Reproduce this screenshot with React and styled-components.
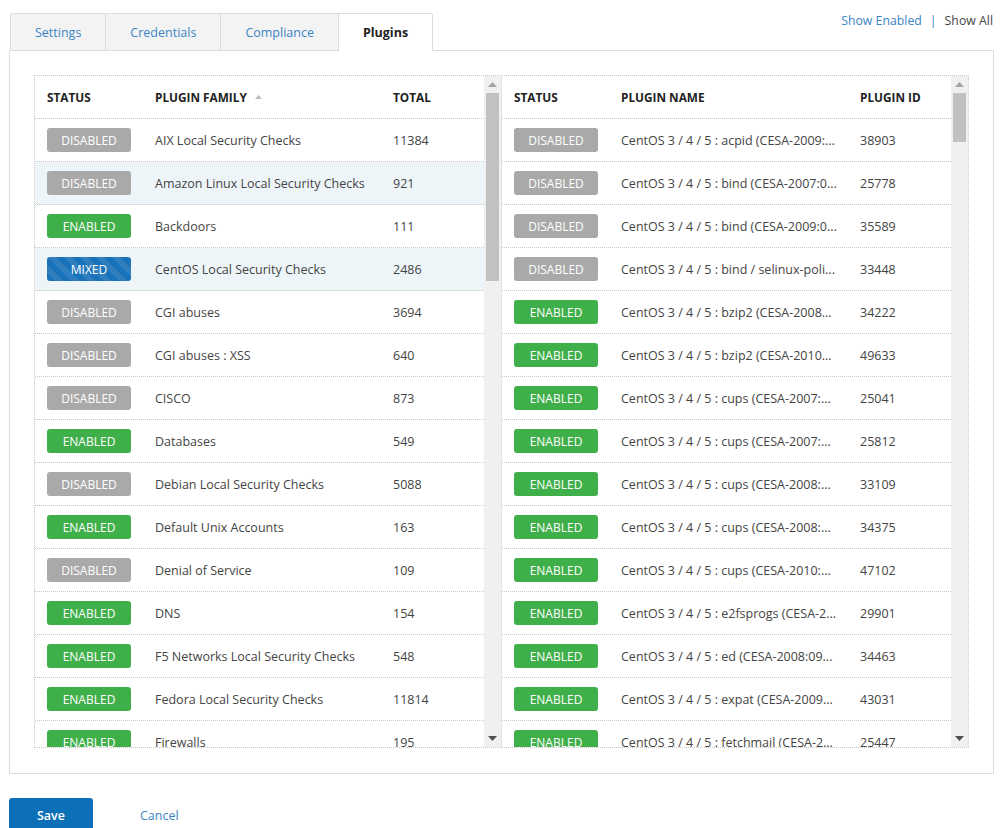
import React from "react";
import styled, { createGlobalStyle, css } from "styled-components";

const Global = createGlobalStyle`
  html, body { margin: 0; padding: 0; background: #fff; }
  body { font-family: "Open Sans", "Noto Sans", Arial, sans-serif; color: #444; }
  * { box-sizing: border-box; }
`;

const Page = styled.div`
  width: 1008px;
  height: 828px;
  overflow: hidden;
  padding: 13px 14px 0 9px;
`;

const TopRow = styled.div`
  display: flex;
  justify-content: space-between;
  align-items: flex-start;
`;

const TabBar = styled.div`
  display: flex;
  padding-left: 1px;
  position: relative;
  z-index: 1;
  margin-bottom: -1px;
`;

const Tab = styled.div`
  height: 38px;
  padding: 0 24px;
  display: flex;
  align-items: center;
  font-size: 12.5px;
  border: 1px solid #dcdcdc;
  border-left-width: ${(p) => (p.$first ? "1px" : "0")};
  border-radius: ${(p) => (p.$first ? "2px 0 0 0" : p.$last ? "0 2px 0 0" : "0")};
  background: ${(p) => (p.$active ? "#fff" : "#f3f3f3")};
  color: ${(p) => (p.$active ? "#222" : "#3a85c6")};
  font-weight: ${(p) => (p.$active ? 700 : 400)};
  border-bottom-color: ${(p) => (p.$active ? "#fff" : "#dcdcdc")};
`;

const Filters = styled.div`
  display: flex;
  align-items: center;
  gap: 8px;
  font-size: 12.3px;
  line-height: 16px;
  padding-right: 1px;
`;

const FilterLink = styled.span`
  color: ${(p) => (p.$active ? "#3a85c6" : "#444")};
`;

const Sep = styled.span`
  color: #3a85c6;
`;

const Panel = styled.div`
  border: 1px solid #dcdcdc;
  padding: 24px;
  height: 724px;
`;

const Tables = styled.div`
  display: flex;
  height: 673px;
`;

const Pane = styled.div`
  flex: 1;
  display: flex;
  border: 1px dotted #c8c8c8;
  ${(p) =>
    p.$left
      ? css`border-right: 1px solid #e2e2e2;`
      : css`border-left: none;`}
  min-width: 0;
`;

const Grid = styled.div`
  flex: 1;
  overflow: hidden;
  min-width: 0;
`;

const Row = styled.div`
  display: grid;
  grid-template-columns: ${(p) => p.$cols};
  align-items: center;
  height: 43px;
  border-bottom: 1px dotted #c8c8c8;
  background: ${(p) => (p.$hl ? "#eef5f9" : "#fff")};
`;

const HeadCell = styled.div`
  padding-left: 12px;
  font-size: 11.8px;
  font-weight: 700;
  color: #222;
  display: flex;
  align-items: center;
  gap: 8px;
  white-space: nowrap;
`;

const Cell = styled.div`
  padding-left: 12px;
  font-size: 12.5px;
  color: #444;
  white-space: nowrap;
  overflow: hidden;
`;

const Badge = styled.div`
  width: 84px;
  height: 24px;
  border-radius: 3px;
  color: #fff;
  font-size: 12px;
  display: flex;
  align-items: center;
  justify-content: center;
  background: ${(p) =>
    p.$s === "ENABLED" ? "#3faf4a" : p.$s === "MIXED" ? "#1a72ba" : "#a9a9a9"};
  ${(p) =>
    p.$s === "MIXED" &&
    css`
      background-image: linear-gradient(
        45deg,
        rgba(255, 255, 255, 0.09) 25%,
        transparent 25%,
        transparent 50%,
        rgba(255, 255, 255, 0.09) 50%,
        rgba(255, 255, 255, 0.09) 75%,
        transparent 75%,
        transparent
      );
      background-size: 16px 16px;
    `}
`;

const Scrollbar = styled.div`
  width: 17px;
  flex: none;
  background: #f0f0f0;
  display: flex;
  flex-direction: column;
  align-items: center;
`;

const ScrollBtn = styled.div`
  height: 17px;
  width: 17px;
  display: flex;
  align-items: center;
  justify-content: center;
`;

const Track = styled.div`
  flex: 1;
  width: 100%;
  padding: 0 2px;
`;

const Thumb = styled.div`
  height: ${(p) => p.$h}px;
  background: #c1c1c1;
`;

const Footer = styled.div`
  display: flex;
  align-items: center;
  margin-top: 24px;
  gap: 47px;
`;

const SaveBtn = styled.div`
  width: 84px;
  height: 36px;
  background: #0b70b8;
  color: #fff;
  font-size: 12.5px;
  font-weight: 600;
  border-radius: 3px 3px 0 0;
  display: flex;
  align-items: center;
  justify-content: center;
  padding-bottom: 2px;
`;

const CancelLink = styled.span`
  color: #3a85c6;
  font-size: 12.5px;
  margin-bottom: 2px;
`;

const SortArrow = () => (
  <svg width="7" height="4" viewBox="0 0 7 4">
    <path d="M0 4 L3.5 0 L7 4 Z" fill="#bbb" />
  </svg>
);

const Arrow = ({ up, color }) => (
  <svg width="9" height="5" viewBox="0 0 9 5">
    <path d={up ? "M0 5 L4.5 0 L9 5 Z" : "M0 0 L4.5 5 L9 0 Z"} fill={color} />
  </svg>
);

const ScrollBar = ({ thumb }) => (
  <Scrollbar>
    <ScrollBtn>
      <Arrow up color="#a3a3a3" />
    </ScrollBtn>
    <Track>
      <Thumb $h={thumb} />
    </Track>
    <ScrollBtn>
      <Arrow color="#505050" />
    </ScrollBtn>
  </Scrollbar>
);

const families = [
  ["DISABLED", "AIX Local Security Checks", "11384"],
  ["DISABLED", "Amazon Linux Local Security Checks", "921", true],
  ["ENABLED", "Backdoors", "111"],
  ["MIXED", "CentOS Local Security Checks", "2486", true],
  ["DISABLED", "CGI abuses", "3694"],
  ["DISABLED", "CGI abuses : XSS", "640"],
  ["DISABLED", "CISCO", "873"],
  ["ENABLED", "Databases", "549"],
  ["DISABLED", "Debian Local Security Checks", "5088"],
  ["ENABLED", "Default Unix Accounts", "163"],
  ["DISABLED", "Denial of Service", "109"],
  ["ENABLED", "DNS", "154"],
  ["ENABLED", "F5 Networks Local Security Checks", "548"],
  ["ENABLED", "Fedora Local Security Checks", "11814"],
  ["ENABLED", "Firewalls", "195"],
];

const P = "CentOS 3 / 4 / 5 : ";
const plugins = [
  ["DISABLED", P + "acpid (CESA-2009:...", "38903"],
  ["DISABLED", P + "bind (CESA-2007:0...", "25778"],
  ["DISABLED", P + "bind (CESA-2009:0...", "35589"],
  ["DISABLED", P + "bind / selinux-poli...", "33448"],
  ["ENABLED", P + "bzip2 (CESA-2008...", "34222"],
  ["ENABLED", P + "bzip2 (CESA-2010...", "49633"],
  ["ENABLED", P + "cups (CESA-2007:...", "25041"],
  ["ENABLED", P + "cups (CESA-2007:...", "25812"],
  ["ENABLED", P + "cups (CESA-2008:...", "33109"],
  ["ENABLED", P + "cups (CESA-2008:...", "34375"],
  ["ENABLED", P + "cups (CESA-2010:...", "47102"],
  ["ENABLED", P + "e2fsprogs (CESA-2...", "29901"],
  ["ENABLED", P + "ed (CESA-2008:09...", "34463"],
  ["ENABLED", P + "expat (CESA-2009...", "43031"],
  ["ENABLED", P + "fetchmail (CESA-2...", "25447"],
];

const LEFT_COLS = "108px 238px 1fr";
const RIGHT_COLS = "107px 239px 1fr";

const DataPane = ({ left, cols, heads, rows, thumb }) => (
  <Pane $left={left}>
    <Grid>
      <Row $cols={cols}>
        {heads.map((h, i) => (
          <HeadCell key={i}>
            {h}
            {left && i === 1 && <SortArrow />}
          </HeadCell>
        ))}
      </Row>
      {rows.map(([s, name, n, hl], i) => (
        <Row key={i} $cols={cols} $hl={hl}>
          <Cell>
            <Badge $s={s}>{s}</Badge>
          </Cell>
          <Cell>{name}</Cell>
          <Cell>{n}</Cell>
        </Row>
      ))}
    </Grid>
    <ScrollBar thumb={thumb} />
  </Pane>
);

export default function App() {
  return (
    <>
      <Global />
      <Page>
        <TopRow>
          <TabBar>
            <Tab $first>Settings</Tab>
            <Tab>Credentials</Tab>
            <Tab>Compliance</Tab>
            <Tab $active $last>Plugins</Tab>
          </TabBar>
          <Filters>
            <FilterLink $active>Show Enabled</FilterLink>
            <Sep>|</Sep>
            <FilterLink>Show All</FilterLink>
          </Filters>
        </TopRow>
        <Panel>
          <Tables>
            <DataPane
              left
              cols={LEFT_COLS}
              heads={["STATUS", "PLUGIN FAMILY", "TOTAL"]}
              rows={families}
              thumb={188}
            />
            <DataPane
              cols={RIGHT_COLS}
              heads={["STATUS", "PLUGIN NAME", "PLUGIN ID"]}
              rows={plugins}
              thumb={49}
            />
          </Tables>
        </Panel>
        <Footer>
          <SaveBtn>Save</SaveBtn>
          <CancelLink>Cancel</CancelLink>
        </Footer>
      </Page>
    </>
  );
}
